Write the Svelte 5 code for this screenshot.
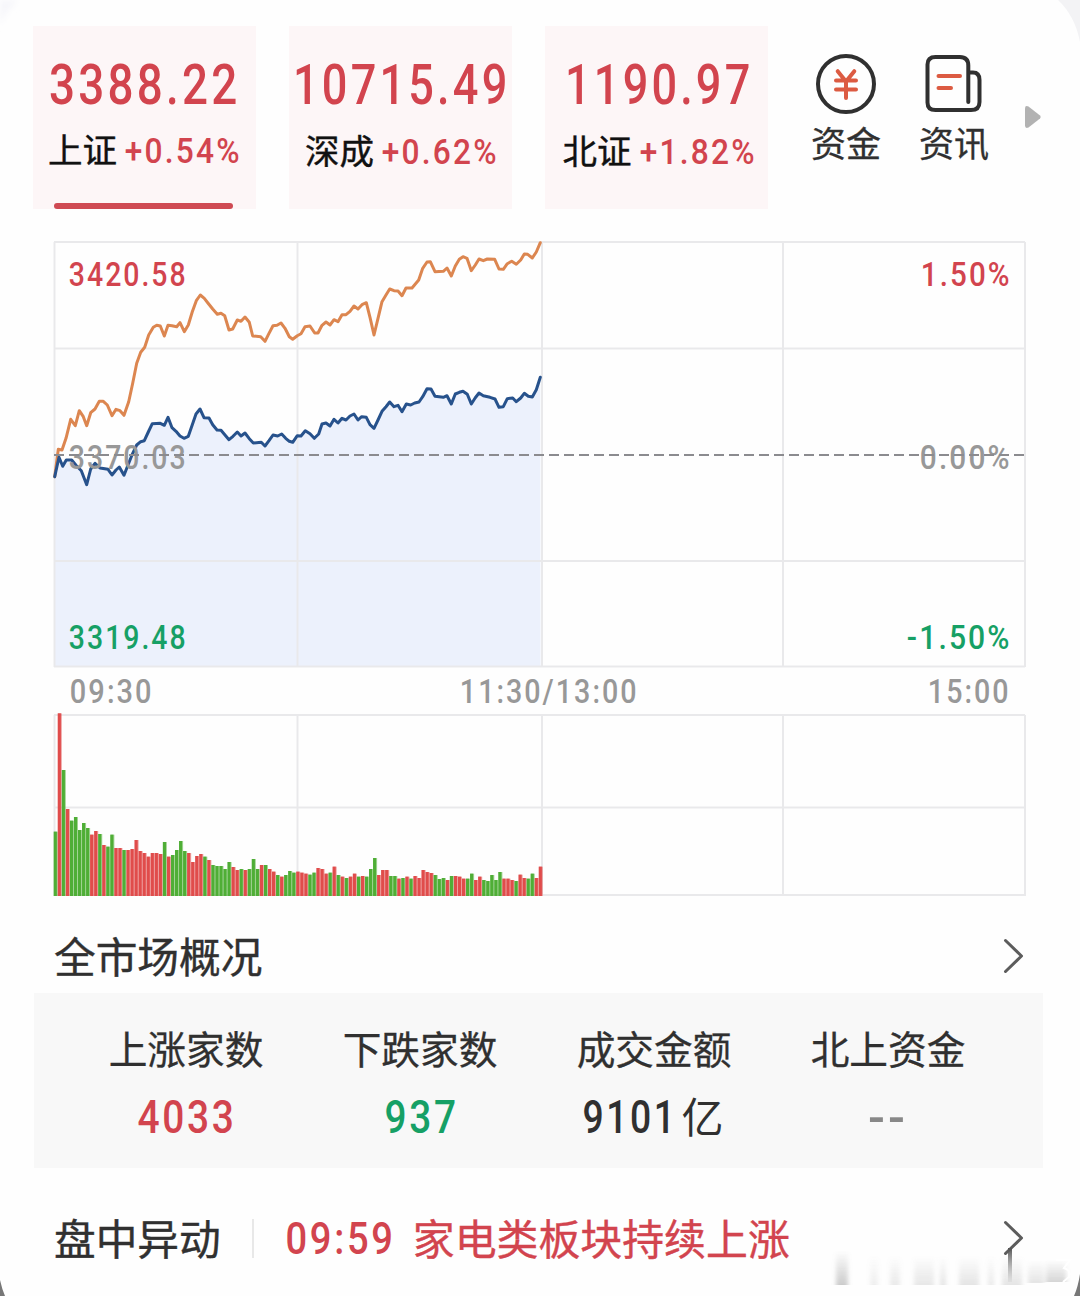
<script>
  const tabs = [
    { value: '3388.22', valueWidth: 185, name: '上证', change: '+0.54%', active: true },
    { value: '10715.49', valueWidth: 211, name: '深成', change: '+0.62%' },
    { value: '1190.97', valueWidth: 182, name: '北证', change: '+1.82%' }
  ];

  const stats = [
    { label: '上涨家数', value: '4033', width: 94, tone: 'up' },
    { label: '下跌家数', value: '937', width: 69, tone: 'down' },
    { label: '成交金额', value: '9101', width: 90, unit: '亿', tone: 'ink' },
    { label: '北上资金', value: '--', width: 32, tone: 'muted' }
  ];

  // Line samples, three units per pixel, relative to the plot origin.
  const ORIGIN_X = 40;
  const ORIGIN_Y = 230;
  const leading = '44,740 55,658 66,660 78,625 92,568 106,587 118,542 130,560 140,587 152,548 165,537 178,514 190,514 202,525 216,557 228,538 240,542 252,556 266,515 278,460 290,400 302,367 314,352 326,315 340,292 350,286 361,288 373,318 384,286 396,287 410,290 420,278 433,305 445,285 457,245 469,212 481,195 493,205 506,222 518,237 532,253 543,250 554,257 567,300 578,297 592,270 603,274 615,261 628,277 638,318 662,320 675,334 687,310 699,287 711,286 723,279 735,295 748,320 758,328 772,317 783,311 795,290 810,288 824,309 834,309 846,286 858,276 870,285 882,269 894,275 906,254 918,254 930,244 942,228 954,237 966,224 979,218 990,262 1002,315 1014,265 1026,215 1038,195 1049,177 1062,182 1074,183 1086,197 1098,174 1116,174 1136,150 1148,115 1161,96 1171,95 1185,125 1210,124 1221,114 1234,138 1246,108 1258,88 1269,80 1281,85 1294,122 1306,105 1317,87 1330,92 1342,87 1364,88 1377,117 1390,118 1402,101 1415,94 1429,103 1442,90 1453,72 1463,73 1477,84 1489,66 1501,38';
  const index = '44,740 57,682 68,709 79,690 95,690 108,706 124,722 140,764 152,717 165,700 180,714 204,718 216,735 228,720 238,711 252,736 266,700 278,670 290,645 302,635 313,632 325,606 337,581 361,580 373,586 384,562 396,593 408,604 420,618 432,625 445,619 457,584 468,552 480,537 492,563 507,564 518,584 531,600 543,601 567,629 579,619 592,606 603,618 615,609 628,626 640,639 664,637 675,648 687,632 699,615 713,618 725,612 737,625 748,634 758,637 772,617 783,618 796,602 810,611 823,625 836,612 846,582 858,579 870,588 882,568 894,579 906,565 918,570 930,558 942,552 954,570 965,560 979,562 990,584 1002,595 1014,570 1026,544 1038,530 1049,516 1062,530 1074,526 1086,545 1099,522 1112,525 1124,519 1137,516 1148,500 1161,476 1173,477 1185,499 1210,502 1221,497 1234,522 1246,492 1258,487 1269,484 1282,493 1294,522 1306,503 1317,489 1330,497 1350,502 1365,507 1377,532 1390,530 1402,506 1418,504 1429,515 1442,504 1453,490 1465,499 1477,501 1489,479 1501,442';

  const toPoints = (raw) =>
    raw
      .split(' ')
      .map((pair) => {
        const [x, y] = pair.split(',').map(Number);
        return `${(ORIGIN_X + x / 3).toFixed(1)},${(ORIGIN_Y + y / 3).toFixed(1)}`;
      })
      .join(' ');

  const leadingLine = toPoints(leading);
  const indexLine = toPoints(index);
  const indexArea = `54.5,666 ${indexLine} 540.5,666`;

  // One bar per minute: top edge (three units per pixel) and direction.
  const volume =
    '395g 40r 210g 327r 362g 351g 390g 369g 384g 404r 393r 402g 435r 440g 404g 444r 444r 450g 450r 447r 420r 453r 459r 470r 459r 459r 462r 426g 470r 465g 450g 423g 453g 459r 486r 468r 462r 470g 480r 495g 498g 498g 507g 486g 501r 510r 507g 510r 507g 477g 507g 495r 495g 507r 515r 525g 530r 525g 513g 518g 515r 518r 521r 524g 518g 504r 507r 521r 518g 500r 525g 530r 534g 530r 521r 530g 528r 530g 507g 474g 525r 510r 510r 528g 528g 536r 534g 530r 536g 528r 534r 510r 516r 519r 525g 537g 534g 540r 528g 528r 530r 536r 536g 521g 540r 530r 540g 543g 525g 540g 516g 536r 536r 540r 543g 524r 534r 536g 521g 534r 500r';
  const bars = volume.split(' ').map((entry, i) => {
    const top = 700 + parseInt(entry) / 3;
    return { x: 55.2 + i * 4.042 - 1.45, y: top, h: 896 - top, rise: entry.endsWith('r') };
  });

  const verticals = [54.5, 297.5, 542, 783, 1025];
</script>

{#snippet glyphs(text, x, baseline, width, cap, tone)}
  {@const size = cap / 0.711}
  <text
    class="digits {tone}"
    x={x - size * 0.035}
    y={baseline}
    font-size={size}
    letter-spacing={size * 0.07}
    textLength={width + size * 0.115}
    lengthAdjust="spacingAndGlyphs">{text}</text>
{/snippet}

{#snippet num(text, width, cap, tone)}
  <svg class="num" {width} height={cap}>
    {@render glyphs(text, 0, cap, width, cap, tone)}
  </svg>
{/snippet}

{#snippet chevron()}
  <svg class="chevron" width="22" height="36" viewBox="0 0 22 36">
    <path d="M2.5 2.5 18.5 18 2.5 33.5" />
  </svg>
{/snippet}

<main class="page">
  <header class="top">
    {#each tabs as tab}
      <section class="tab">
        {@render num(tab.value, tab.valueWidth, 39.5, 'up')}
        <div class="tab-line">
          <span class="tab-name">{tab.name}</span>
          {@render num(tab.change, 113, 25.5, 'up')}
        </div>
        {#if tab.active}<div class="underline"></div>{/if}
      </section>
    {/each}
    <nav class="tools">
      <div class="tool">
        <svg width="60" height="60" viewBox="0 0 60 60">
          <circle class="outline" cx="30" cy="30" r="28" />
          <path class="accent" d="M21.7 17.2 30 27.5 38.3 17.2M20 26.5H40M20 35.5H40M30 27.5V44" />
        </svg>
        <span>资金</span>
      </div>
      <div class="tool">
        <svg width="60" height="60" viewBox="0 0 60 60">
          <path class="outline" d="M44.3 48V11.5Q44.3 3 35.8 3H11.5Q3.500 3 3.500 10.5V48.5Q3.500 56 11.5 56H47Q55.500 56 55.500 48V26Q55.500 18.5 49 18.5H45" />
          <path class="accent" d="M14.500 22H36M14.500 34H27" />
        </svg>
        <span>资讯</span>
      </div>
      <svg class="more" width="18" height="24" viewBox="0 0 18 24">
        <path d="M1 3.500Q1 0 4.500 1.500L16 10.500Q17.500 12 16 13.500L4.500 22.500Q1 24 1 20.500Z" />
      </svg>
    </nav>
  </header>

  <svg class="chart" width="1080" height="662" viewBox="0 238 1080 662">
    <polygon class="area" points={indexArea} />
    {#each verticals as x}
      <path class="grid" d="M{x} 242V667M{x} 715V896" />
    {/each}
    <path class="grid" d="M54 242H1025M54 348.500H1025M54 561H1025M54 666.500H1025" />
    <path class="grid" d="M54 715H1025M54 807.500H1025M54 895H1025" />

    <polyline class="leading" points={leadingLine} />
    <polyline class="index" points={indexLine} />

    {@render glyphs('3420.58', 70, 286, 115, 23.5, 'up')}
    {@render glyphs('3370.03', 70, 469, 115, 23.5, 'flat')}
    {@render glyphs('3319.48', 70, 649, 115, 23.5, 'down')}
    {@render glyphs('1.50%', 922, 286, 87, 23.5, 'up')}
    {@render glyphs('0.00%', 921, 469, 88, 23.5, 'flat')}
    {@render glyphs('-1.50%', 908, 649, 101, 23.5, 'down')}
    <path class="zero" d="M54 455H1025" />

    {@render glyphs('09:30', 71, 703, 80, 23, 'flat')}
    {@render glyphs('11:30/13:00', 461, 703, 175, 23, 'flat')}
    {@render glyphs('15:00', 929, 703, 79, 23, 'flat')}

    {#each bars as bar}
      <rect class="fade {bar.rise ? 'rise' : 'fall'}" x={bar.x} y={bar.y} width="4.04" height={bar.h} />
      <rect class={bar.rise ? 'rise' : 'fall'} x={bar.x} y={bar.y} width="3.1" height={bar.h} />
    {/each}
  </svg>

  <div class="heading">
    <h2>全市场概况</h2>
    {@render chevron()}
  </div>

  <section class="stats">
    {#each stats as stat}
      <div class="stat">
        <span class="stat-label">{stat.label}</span>
        <div class="stat-value">
          {#if stat.value === '--'}
            <span class="dashes">--</span>
          {:else}
            {@render num(stat.value, stat.width, 32.5, stat.tone)}
          {/if}
          {#if stat.unit}<span class="unit">{stat.unit}</span>{/if}
        </div>
      </div>
    {/each}
  </section>

  <footer class="alerts">
    <h2>盘中异动</h2>
    <div class="rule"></div>
    {@render num('09:59', 105, 32, 'up')}
    <span class="news">家电类板块持续上涨</span>
    {@render chevron()}
  </footer>

  <svg class="overlay" width="1080" height="1296" viewBox="0 0 1080 1296">
    <defs>
      <linearGradient id="smear" x1="0" y1="0" x2="0" y2="1">
        <stop offset="0" stop-color="#999" stop-opacity="0" />
        <stop offset="1" stop-color="#999" stop-opacity="0.5" />
      </linearGradient>
      <linearGradient id="tail" x1="0" y1="0" x2="0" y2="1">
        <stop offset="0" stop-color="#555" />
        <stop offset="1" stop-color="#999" stop-opacity="0.1" />
      </linearGradient>
      <filter id="soft"><feGaussianBlur stdDeviation="2.200 0.600" /></filter>
      <filter id="haze" x="-50%" y="-50%" width="200%" height="200%"><feGaussianBlur stdDeviation="3" /></filter>
    </defs>
    <path fill="#f3f3f5" d="M1058 0Q1075 16 1080 42V0Z" />
    <path fill="#f6f6fa" filter="url(#haze)" d="M0 0H18Q6 10 0 26Z" />
    <path fill="#777" d="M0 1280Q2 1289 5 1296H0ZM1080 1274Q1078 1287 1074 1296H1080Z" />
    <g filter="url(#soft)" fill="url(#smear)">
      <rect x="836" y="1251" width="12" height="34" />
      <rect x="870" y="1256" width="8" height="29" opacity=".3" />
      <rect x="890" y="1256" width="10" height="29" opacity=".4" />
      <rect x="914" y="1256" width="20" height="29" opacity=".45" />
      <rect x="940" y="1256" width="6" height="29" opacity=".5" />
      <rect x="959" y="1256" width="20" height="29" opacity=".5" />
      <rect x="988" y="1256" width="6" height="29" opacity=".4" />
      <rect x="1002" y="1256" width="20" height="29" opacity=".5" />
      <rect x="1028" y="1260" width="16" height="23" opacity=".5" />
      <rect x="1046" y="1260" width="20" height="22" opacity=".8" />
    </g>
    <rect x="1008" y="1248" width="4" height="34" fill="url(#tail)" />
    <path class="glint" d="M1056 1260H1070L1064 1268Q1071 1270 1069 1277L1063 1282" />
  </svg>
</main>

<style>
  :global(body) {
    margin: 0;
    background: #fefefe;
  }
  .page {
    position: relative;
    box-sizing: border-box;
    width: 1080px;
    height: 1296px;
    padding-top: 26px;
    overflow: hidden;
    background: #fefefe;
    color: #303030;
    font-family: 'Noto Sans CJK SC', sans-serif;
  }
  svg {
    display: block;
    flex: none;
  }
  .num {
    overflow: visible;
  }
  .digits {
    font-family: Roboto, sans-serif;
    font-weight: 500;
    fill: currentColor;
  }
  .up { color: #d2444e; }
  .down { color: #16a065; }
  .flat { color: #989898; }
  .ink { color: #303030; }
  .muted { color: #888; }

  .top {
    display: flex;
    gap: 33px;
    height: 212px;
    padding-left: 33px;
  }
  .tab {
    display: flex;
    flex-direction: column;
    align-items: center;
    box-sizing: border-box;
    width: 223px;
    height: 183px;
    padding-top: 38px;
    background: #fdf6f7;
  }
  .tab:first-child {
    padding-right: 2px;
  }
  .tab:nth-child(3) {
    padding-left: 3px;
  }
  .tab-line {
    display: flex;
    align-items: center;
    gap: 9px;
    height: 36px;
    margin-top: 29px;
  }
  .tab-name {
    color: #111;
    font-size: 34.5px;
    line-height: 36px;
    margin-top: -3px;
    -webkit-text-stroke: 0.4px #111;
  }
  .underline {
    width: 179px;
    height: 6px;
    margin-top: 36px;
    border-radius: 3px;
    background: #cf4a53;
  }
  .tools {
    display: flex;
    gap: 38px;
    padding: 28px 0 0 10px;
  }
  .tool {
    display: flex;
    flex-direction: column;
    align-items: center;
    width: 70px;
    font-size: 35px;
    line-height: 36px;
  }
  .tool span {
    margin-top: 10px;
    -webkit-text-stroke: 0.3px #303030;
  }
  .outline,
  .accent {
    fill: none;
    stroke: #303030;
    stroke-width: 4;
    stroke-linecap: round;
    stroke-linejoin: round;
  }
  .accent {
    stroke: #dc5b42;
  }
  .more {
    margin: 51px 0 0 -3px;
    fill: #b2b2b2;
  }

  .area { fill: #ecf1fc; }
  .grid {
    fill: none;
    stroke: #e9e9eb;
    stroke-width: 2;
  }
  .leading,
  .index {
    fill: none;
    stroke: #dc8650;
    stroke-width: 3;
    stroke-linejoin: round;
    stroke-linecap: round;
  }
  .index { stroke: #27528c; }
  .zero {
    stroke: #8b8b8f;
    stroke-width: 2;
    stroke-dasharray: 10 5;
  }
  .rise { fill: #e04c4b; }
  .fall { fill: #4fae36; }
  .fade { opacity: 0.5; }

  h2 {
    margin: 0;
    font-size: 41.7px;
    font-weight: 400;
    line-height: 50px;
    -webkit-text-stroke: 0.4px #303030;
  }
  .heading {
    display: flex;
    align-items: center;
    justify-content: space-between;
    height: 50px;
    padding: 31px 55px 12px 54px;
  }
  .heading h2,
  .alerts h2,
  .news {
    margin-top: -3px;
  }
  .chevron path {
    fill: none;
    stroke: #5c5c5c;
    stroke-width: 3;
    stroke-linecap: round;
    stroke-linejoin: round;
  }
  .stats {
    display: grid;
    grid-template-columns: repeat(4, 234px);
    box-sizing: border-box;
    width: 1009px;
    height: 175px;
    margin-left: 34px;
    padding: 34px 0 0 35px;
    background: #f8f8f8;
  }
  .stat {
    display: flex;
    flex-direction: column;
    align-items: center;
  }
  .stat-label {
    font-size: 38.7px;
    line-height: 40px;
    -webkit-text-stroke: 0.3px #303030;
  }
  .stat-value {
    display: flex;
    align-items: center;
    gap: 7px;
    height: 40px;
    margin-top: 29px;
  }
  .unit {
    margin-top: -3px;
    font-size: 42px;
    line-height: 40px;
  }
  .dashes {
    margin-top: 4px;
    color: #888;
    font-family: Roboto, sans-serif;
    font-size: 50px;
    font-weight: 500;
    letter-spacing: 3px;
  }
  .alerts {
    display: flex;
    align-items: center;
    height: 50px;
    padding: 45px 55px 0 54px;
  }
  .rule {
    width: 2px;
    height: 39px;
    margin: 0 33px 0 31px;
    background: #e8e8e8;
  }
  .news {
    flex: 1;
    margin-left: 21px;
    color: #d2444e;
    font-size: 41.9px;
    line-height: 50px;
    -webkit-text-stroke: 0.4px #d2444e;
  }
  .overlay {
    position: absolute;
    inset: 0;
    pointer-events: none;
  }
  .glint {
    fill: none;
    stroke: #fff;
    stroke-width: 2;
  }
</style>
